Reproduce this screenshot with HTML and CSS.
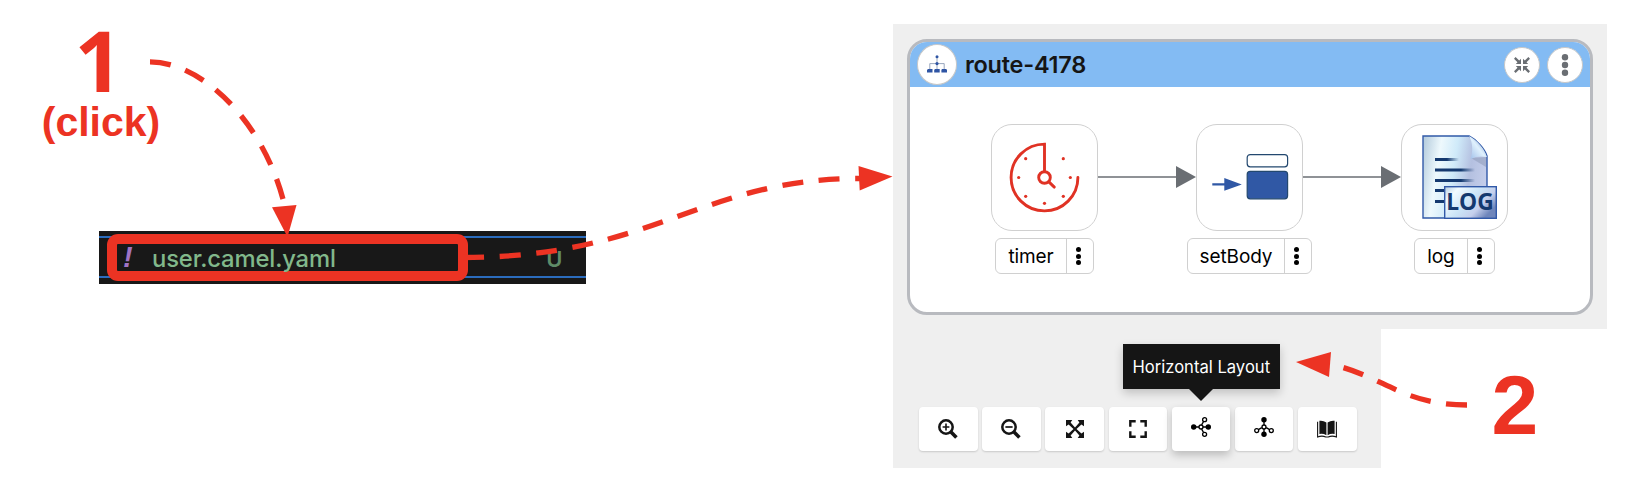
FILE: index.html
```
<!DOCTYPE html>
<html lang="en">
<head>
<meta charset="utf-8">
<title>Route layout guide</title>
<link rel="stylesheet" href="styles.css">
</head>
<body>
<main class="guide">
  <section class="source">
    <div class="step step-one">
      <div class="step-number">1</div>
      <div class="step-hint">(click)</div>
    </div>
    <div class="file-strip">
      <div class="file-row">
        <div class="file-highlight">
          <span class="file-icon">!</span>
          <span class="file-name">user.camel.yaml</span>
        </div>
        <span class="file-status">U</span>
      </div>
    </div>
  </section>

  <section class="designer">
    <div class="canvas">
      <article class="route">
        <header class="route-head">
          <span class="route-logo">
            <svg width="20" height="19" viewBox="0 0 20 19">
              <g fill="none" stroke="#7f90ad" stroke-width="0.8"><path d="M10 2V14M2.8 14V8.6H17.2V14"/></g>
              <g fill="#2f55a4"><circle cx="10" cy="1.7" r="1.5"/><circle cx="10" cy="8.6" r="1.6"/>
              <path d="M1 14H5.5V17.5H0V15zM8 14H12.7V17.5H7.2V15zM15 14H19.2L20 15V17.5H14.4V15z"/></g>
            </svg>
          </span>
          <h1 class="route-title">route-4178</h1>
          <span class="round-button">
            <svg width="16" height="16" viewBox="0 0 16 16">
              <g fill="#6a6e73"><path d="M7 7H1.8L3.5 5.2 0 1.7 1.6 0 5.2 3.5 7 1.8zM9 7V1.8l1.8 1.7L14.4 0 16 1.7l-3.5 3.5L14.2 7zM7 9v5.2l-1.8-1.7L1.6 16 0 14.3l3.5-3.5L1.8 9zM9 9h5.2l-1.7 1.8 3.5 3.5-1.6 1.7-3.6-3.5L9 14.2z"/></g>
            </svg>
          </span>
          <span class="round-button">
            <svg width="8" height="24" viewBox="0 0 8 24"><g fill="#6a6e73"><circle cx="4" cy="4.2" r="3.2"/><circle cx="4" cy="12" r="3.2"/><circle cx="4" cy="19.8" r="3.2"/></g></svg>
          </span>
        </header>
        <div class="flow">
          <div class="node">
            <div class="node-box">
              <svg width="71" height="71" viewBox="0 0 71 71">
                <g fill="none" stroke="#e03224" stroke-width="2.9">
                  <path d="M35.5 28.5V2.1A33.4 33.4 0 1 0 68.9 35.5" stroke-linecap="round"/>
                  <circle cx="35.5" cy="35.5" r="5.8"/>
                  <path d="M39.9 39.9l5.4 5.2" stroke-linecap="round"/>
                </g>
                <g fill="#e03224"><circle cx="16.7" cy="16.7" r="1.6"/><circle cx="54.3" cy="16.7" r="1.6"/><circle cx="9.7" cy="35.5" r="1.6"/><circle cx="61.3" cy="35.5" r="1.6"/><circle cx="16.7" cy="54.3" r="1.6"/><circle cx="54.3" cy="54.3" r="1.6"/><circle cx="35.5" cy="61.3" r="1.6"/></g>
              </svg>
            </div>
            <div class="tag"><span class="tag-name">timer</span><span class="tag-menu"><i></i><i></i><i></i></span></div>
          </div>
          <svg class="edge" width="98" height="24" viewBox="0 0 98 24"><path d="M0 12H78" stroke="#6a6e73" stroke-width="1.3"/><path d="M78 1V23L98 12z" fill="#6a6e73"/></svg>
          <div class="node">
            <div class="node-box">
              <svg width="80" height="50" viewBox="0 0 80 50">
                <rect x="37.2" y="2.6" width="40.4" height="12.2" rx="3" fill="#fff" stroke="#23486f" stroke-width="1.2"/>
                <rect x="37.2" y="19.4" width="40.4" height="27.4" rx="3" fill="#3058a5" stroke="#23486f" stroke-width="1.2"/>
                <path d="M2.3 31.2H14.3V26L31.8 32.4 14.3 38.8V33.6H2.3z" fill="#3058a5"/>
              </svg>
            </div>
            <div class="tag"><span class="tag-name">setBody</span><span class="tag-menu"><i></i><i></i><i></i></span></div>
          </div>
          <svg class="edge" width="98" height="24" viewBox="0 0 98 24"><path d="M0 12H78" stroke="#6a6e73" stroke-width="1.3"/><path d="M78 1V23L98 12z" fill="#6a6e73"/></svg>
          <div class="node">
            <div class="node-box">
              <svg class="log-icon" width="75" height="84" viewBox="0 0 75 84">
                <defs>
                  <linearGradient id="sheet" x1="0" y1="0.2" x2="1" y2="0.4"><stop offset="0" stop-color="#b9cfdf"/><stop offset="0.25" stop-color="#eef9fd"/><stop offset="0.5" stop-color="#cfeaf9"/><stop offset="0.75" stop-color="#b4c0e0"/><stop offset="1" stop-color="#c3cdea"/></linearGradient>
                  <linearGradient id="badge" x1="0" y1="0" x2="1" y2="0.6"><stop offset="0" stop-color="#b5cde0"/><stop offset="0.22" stop-color="#f1fbff"/><stop offset="0.55" stop-color="#cbe4f7"/><stop offset="0.78" stop-color="#c5cfec"/><stop offset="1" stop-color="#6f86bb"/></linearGradient>
                  <linearGradient id="curl" x1="0" y1="1" x2="1" y2="0"><stop offset="0" stop-color="#9dbde8"/><stop offset="0.5" stop-color="#e0f1fd"/><stop offset="1" stop-color="#5f82be"/></linearGradient>
                  <linearGradient id="line" gradientUnits="userSpaceOnUse" x1="13" y1="0" x2="53" y2="0"><stop offset="0.65" stop-color="#14396f"/><stop offset="1" stop-color="#14396f" stop-opacity="0"/></linearGradient>
                  <linearGradient id="short" gradientUnits="userSpaceOnUse" x1="13" y1="0" x2="37" y2="0"><stop offset="0.5" stop-color="#14396f"/><stop offset="1" stop-color="#14396f" stop-opacity="0"/></linearGradient>
                </defs>
                <path d="M1 1H47C55 5 63 14 65 21V83H1z" fill="url(#sheet)" stroke="#3159a8" stroke-width="1.4"/>
                <path d="M49 23L64 22V32z" fill="#8e9bb8" opacity=".55"/>
                <path d="M47 1C51 8 51 17 48.5 24C54 21 60 21 65 22C62 13 55 5 47 1z" fill="url(#curl)"/>
                <path d="M13 23H37v3H13z" fill="url(#short)"/>
                <path d="M13 33.5H53v3H13zM13 44H53v3H13zM13 54H22v3H13zM13 65H22v3H13z" fill="url(#line)"/>
                <rect x="22.7" y="51.7" width="51.6" height="31.6" fill="url(#badge)" stroke="#3159a8" stroke-width="1.4"/>
                <text class="log-text" x="24.2" y="75" textLength="47.5" lengthAdjust="spacingAndGlyphs">LOG</text>
              </svg>
            </div>
            <div class="tag"><span class="tag-name">log</span><span class="tag-menu"><i></i><i></i><i></i></span></div>
          </div>
        </div>
      </article>
    </div>

    <div class="controls">
      <div class="toolbar">
        <span class="tool"><svg width="20" height="20" viewBox="0 0 20 20"><g fill="none" stroke="#151515"><circle cx="8" cy="8" r="6.7" stroke-width="2.5"/><path d="M13 13l5.4 5.4" stroke-width="3.6"/><path d="M4.6 8h6.8M8 4.6v6.8" stroke-width="1.6"/></g></svg></span>
        <span class="tool"><svg width="20" height="20" viewBox="0 0 20 20"><g fill="none" stroke="#151515"><circle cx="8" cy="8" r="6.7" stroke-width="2.5"/><path d="M13 13l5.4 5.4" stroke-width="3.6"/><path d="M4.4 8h7.2" stroke-width="1.7"/></g></svg></span>
        <span class="tool"><svg width="18" height="18" viewBox="0 0 18 18"><path d="M0 0H6.3L4.6 2.6 9 7.5 13.4 2.6 11.7 0H18V6.3L15.4 4.6 10.5 9 15.4 13.4 18 11.7V18H11.7L13.4 15.4 9 10.5 4.6 15.4 6.3 18H0V11.7L2.6 13.4 7.5 9 2.6 4.6 0 6.3z" fill="#151515"/></svg></span>
        <span class="tool"><svg width="18" height="18" viewBox="0 0 18 18"><path d="M1.3 6.7V1.3H6.7M11.3 1.3H16.7V6.7M16.7 11.3V16.7H11.3M6.7 16.7H1.3V11.3" fill="none" stroke="#151515" stroke-width="2.4"/></svg></span>
        <span class="tool tool-active">
          <svg width="20" height="20" viewBox="0 0 20 20"><g fill="none" stroke="#000" stroke-width="1.3"><path d="M5 10H15M10.6 7.8L12.4 4.8M10.6 12.2L12.4 15.2"/><circle cx="13.6" cy="2.7" r="2"/><circle cx="13.6" cy="17.3" r="2"/><circle cx="10" cy="10" r="2" fill="#fff"/></g><circle cx="2.7" cy="10" r="2.7"/><circle cx="17.3" cy="10" r="2.7"/></svg>
          <span class="tooltip">Horizontal Layout</span>
        </span>
        <span class="tool tool-tree"><svg width="20" height="20" viewBox="0 0 20 20"><g fill="none" stroke="#000" stroke-width="1.3"><path d="M10 5V15M7.8 10.6L4.8 12.4M12.2 10.6L15.2 12.4"/><circle cx="2.7" cy="13.6" r="2"/><circle cx="17.3" cy="13.6" r="2"/><circle cx="10" cy="10" r="2" fill="#fff"/></g><circle cx="10" cy="2.7" r="2.7"/><circle cx="10" cy="17.3" r="2.7"/></svg></span>
        <span class="tool"><svg width="20" height="18" viewBox="0 0 20 18"><path d="M2.4 .8Q6 .2 9.4 2.4V15.2Q6 13.2 2.4 14zM17.6 .8Q14 .2 10.6 2.4V15.2Q14 13.2 17.6 14z" fill="#151515"/><path d="M.6 1.8V17Q5 15.2 8.8 17H11.2Q15 15.2 19.4 17V1.8" fill="none" stroke="#151515" stroke-width="1.1"/></svg></span>
      </div>
    </div>
  </section>

  <div class="step step-two"><div class="step-number">2</div></div>

  <svg class="arrows" width="1630" height="488" viewBox="0 0 1630 488">
    <g fill="none" stroke="#ec3323" stroke-width="5.3">
      <path d="M150 61.8C202 62 265 122 285 207" stroke-dasharray="21 15.4"/>
      <path d="M463 257.5C655 257.5 700 178.5 860 178.5" stroke-dasharray="21 15.6"/>
      <path d="M1467 405C1403 405 1385 377 1332 364.5" stroke-dasharray="21 15.5 21 15.5 21 15.5 21 60"/>
    </g>
    <g fill="#ec3323">
      <path d="M272 207.3L296.5 205 287.5 237z"/>
      <path d="M858.5 166L892.5 176.5 859.7 190.5z"/>
      <path d="M1296 362L1331 352 1329 377z"/>
    </g>
  </svg>
</main>
</body>
</html>
```
FILE: styles.css
```
* { box-sizing: border-box; }

body {
  margin: 0;
  background: #fff;
  font-family: Inter, "Liberation Sans", sans-serif;
  color: #000;
}

svg { display: block; flex: none; }

.guide {
  position: relative;
  display: grid;
  grid-template-columns: 893px 714px;
  width: 1630px;
  height: 488px;
  overflow: hidden;
}

.source { padding: 18px 0 0 99px; }

.step {
  font-family: "Liberation Sans", Arial, sans-serif;
  font-weight: 700;
  color: #ec3323;
  text-align: center;
}

.step-one {
  width: 116px;
  height: 213px;
  margin-left: -56px;
}

.step-number { font-size: 84px; line-height: 84px; }

.step-one .step-number {
  height: 82px;
  padding-right: 5px;
  font-family: "Open Sans", sans-serif;
}

.step-hint {
  margin: 0 -10px;
  font-size: 41px;
  line-height: 44px;
}

.file-strip {
  width: 486.5px;
  height: 53px;
  padding-top: 5px;
  background: #181818;
}

.file-row {
  display: flex;
  align-items: center;
  height: 42px;
  padding: 0 23px 0 8px;
  border: solid #2b6cbd;
  border-width: 2px 0;
}

.file-highlight {
  display: flex;
  align-items: center;
  flex: none;
  width: 361px;
  height: 47px;
  border: 10px solid #ec3323;
  border-radius: 11px;
}

.file-icon {
  width: 35px;
  padding-left: 6px;
  font-family: "Liberation Sans", Arial, sans-serif;
  font-size: 29px;
  font-style: italic;
  font-weight: 700;
  line-height: 25px;
  color: #a074c4;
}

.file-name {
  padding-top: 3px;
  font-size: 23.8px;
  font-weight: 500;
  letter-spacing: -0.15px;
  line-height: 26px;
  color: #81b88b;
}

.file-status {
  padding-top: 3px;
  margin-left: auto;
  font-size: 22px;
  font-weight: 600;
  color: #5e8b67;
}

.designer { padding-top: 24px; }

.canvas {
  height: 305px;
  padding: 15px 14px 14px 14px;
  background: #efefef;
}

.route {
  height: 276px;
  border: 3px solid #b8babf;
  border-radius: 20px;
  background: #fff;
  overflow: hidden;
}

.route-head {
  display: flex;
  align-items: center;
  height: 45px;
  padding: 0 7px 0 6.5px;
  background: #83bbf3;
}

.route-logo,
.round-button {
  display: flex;
  align-items: center;
  justify-content: center;
  border: 1px solid #c7c7c7;
  border-radius: 50%;
  background: #fff;
}

.route-logo { width: 40px; height: 40.5px; }

.route-title {
  margin: 0 auto 0 8.5px;
  font-size: 23.5px;
  font-weight: 600;
  letter-spacing: -0.25px;
  color: #151515;
}

.round-button {
  width: 36px;
  height: 36px;
  margin-left: 7.3px;
}

.flow {
  display: flex;
  align-items: flex-start;
  padding: 36.5px 0 0 81px;
}

.edge { margin-top: 41.5px; }

.node {
  display: flex;
  flex-direction: column;
  align-items: center;
  gap: 7.5px;
  width: 107px;
}

.node-box {
  display: flex;
  align-items: center;
  justify-content: center;
  width: 107px;
  height: 107px;
  border: 1.3px solid #d0d0d0;
  border-radius: 21px;
}

.log-icon { margin-left: 9px; }

.log-text {
  font: 700 24px "Open Sans", sans-serif;
  fill: #14396f;
}

.tag {
  display: flex;
  height: 36px;
  border: 1.3px solid #d0d0d0;
  border-radius: 6px;
  font-size: 19px;
  line-height: 35px;
}

.tag-name {
  padding: 0 12px;
  letter-spacing: -0.1px;
}

.tag-menu {
  display: flex;
  flex-direction: column;
  align-items: center;
  justify-content: center;
  gap: 1.4px;
  width: 27px;
  padding-right: 3px;
  border-left: 1.3px solid #d0d0d0;
}

.tag-menu i {
  width: 5px;
  height: 5px;
  border-radius: 50%;
  background: #000;
}

.controls {
  width: 488px;
  height: 138.5px;
  padding: 78px 0 0 26px;
  background: #efefef;
}

.toolbar { display: flex; gap: 4.7px; }

.tool {
  display: flex;
  align-items: center;
  justify-content: center;
  width: 58.5px;
  height: 44px;
  border-radius: 4px;
  background: #fff;
  box-shadow: 0 1px 2px rgba(0, 0, 0, 0.16);
}

.tool-active {
  position: relative;
  padding-bottom: 5px;
  box-shadow: 0 4px 9px rgba(0, 0, 0, 0.22);
}

.tool-tree { padding-bottom: 5px; }

.tooltip {
  position: absolute;
  bottom: 62px;
  left: -49px;
  width: 157px;
  height: 45px;
  background: #151515;
  box-shadow: 0 4px 9px rgba(0, 0, 0, 0.2);
  color: #fff;
  font-size: 16.6px;
  line-height: 46px;
  text-align: center;
  white-space: nowrap;
}

.tooltip::after {
  content: "";
  position: absolute;
  top: 100%;
  left: 66px;
  border: solid transparent;
  border-width: 12px 12.5px 0;
  border-top-color: #151515;
}

.step-two {
  position: absolute;
  top: 363px;
  left: 1491.5px;
}

.arrows {
  position: absolute;
  top: 0;
  left: 0;
}
```
